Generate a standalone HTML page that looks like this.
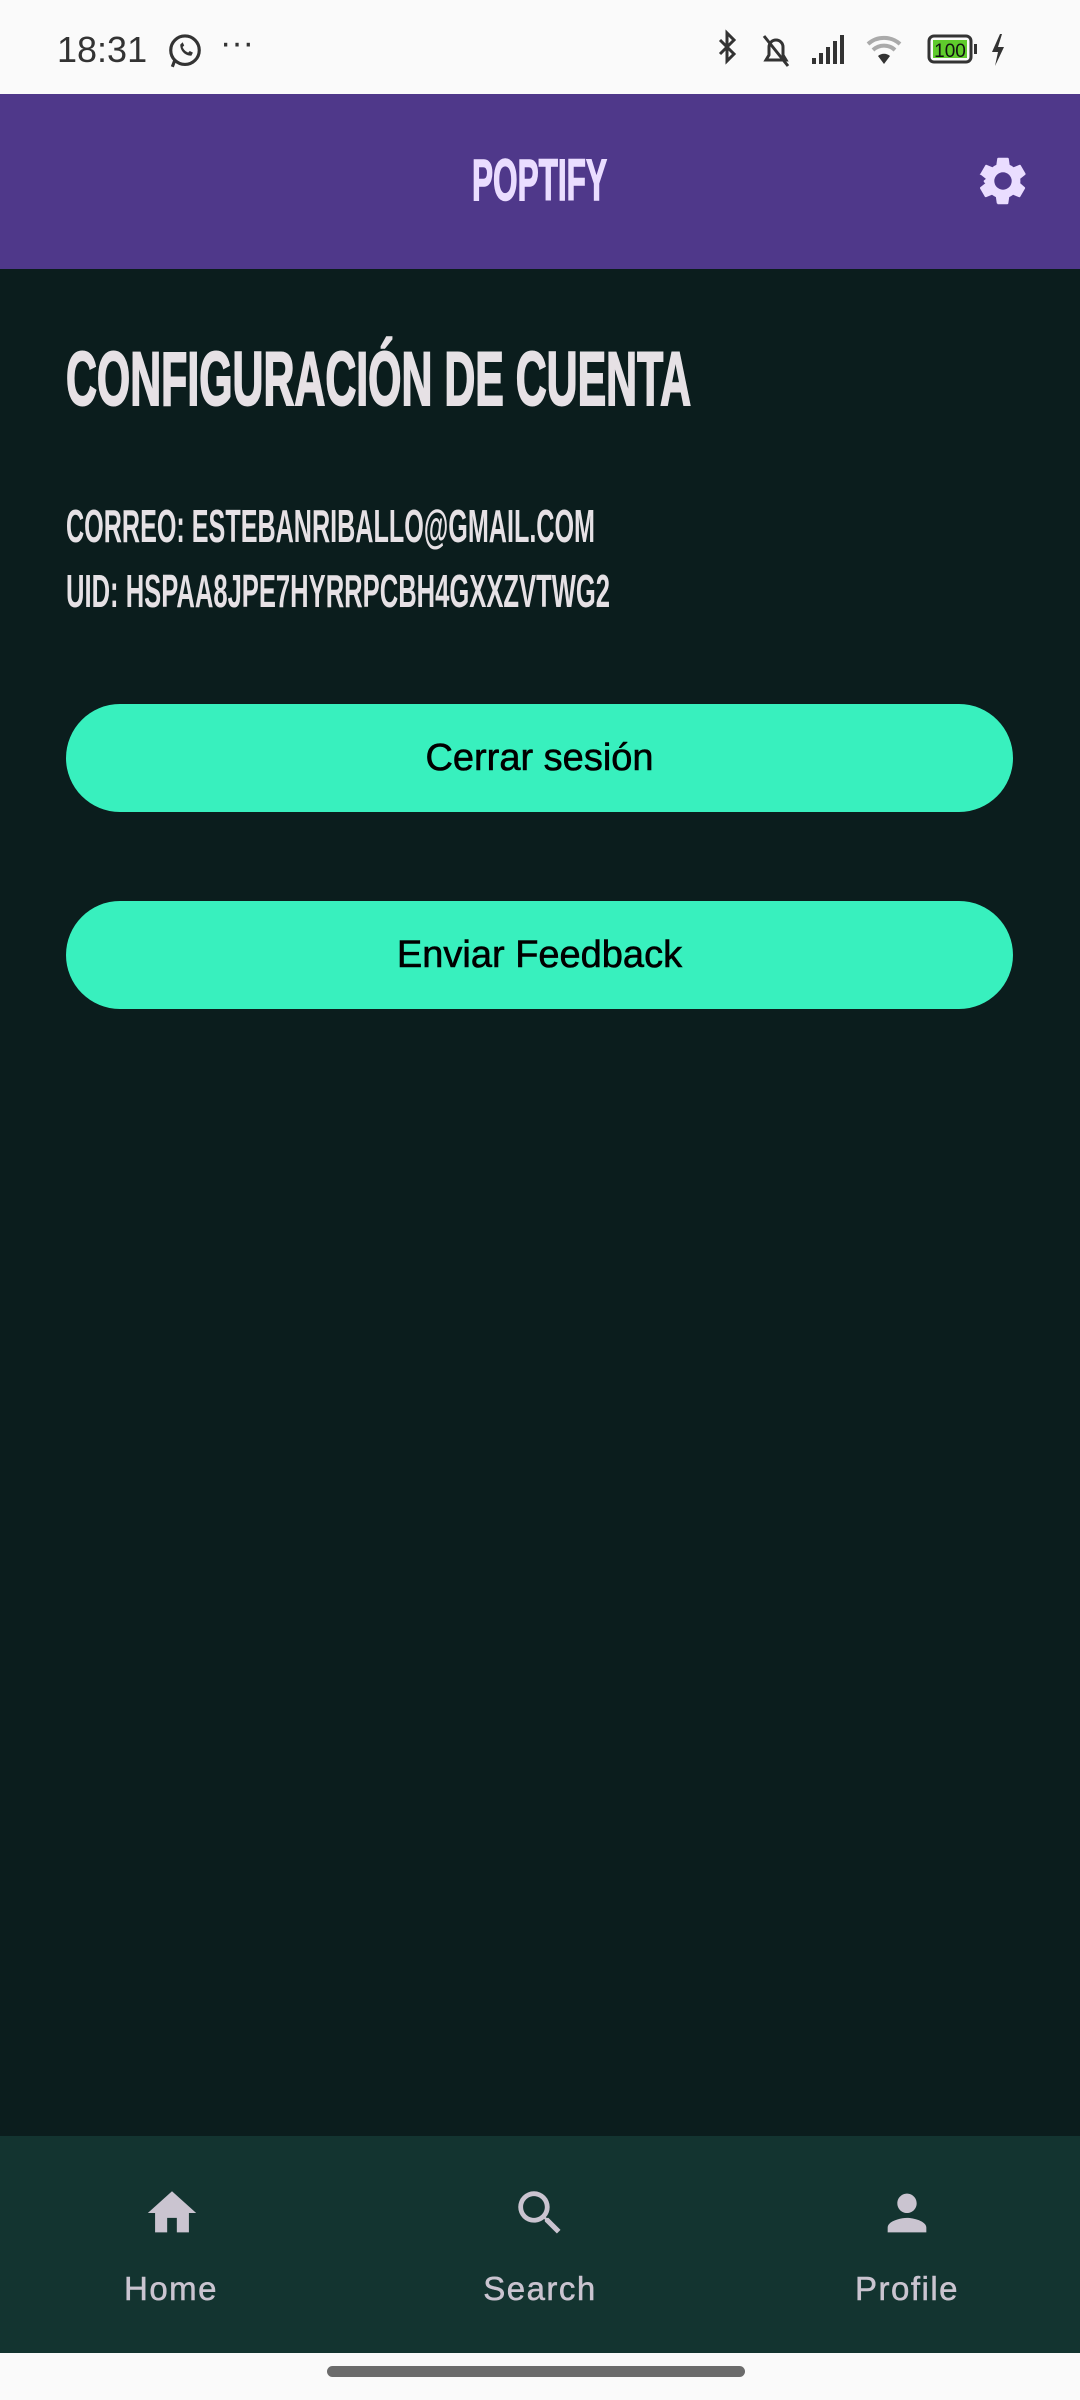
<!DOCTYPE html>
<html><head><meta charset="utf-8"><style>
html,body{margin:0;padding:0;width:1080px;height:2400px;overflow:hidden;background:#0b1d1d;font-family:"Liberation Sans",sans-serif}
.abs{position:absolute}
.btn{position:absolute;left:66px;width:947px;height:108px;border-radius:54px;background:#38f0be;color:#000;font-size:38px;display:flex;align-items:center;justify-content:center;font-family:"Liberation Sans",sans-serif;-webkit-text-stroke:0.6px #000}
.nav{position:absolute;top:2136px;left:0;width:1080px;height:217px;background:#133430}
.item{position:absolute;width:300px;text-align:center;color:#cac4d0;font-size:33px;letter-spacing:1.5px;-webkit-text-stroke:0.5px #cac4d0}
</style></head><body>
<div class="abs" style="left:0;top:0;width:1080px;height:94px;background:#fafafa"></div>
<div class="abs" style="left:57px;top:29px;font-size:36px;color:#333">18:31</div>
<svg class="abs" style="left:166px;top:32px" width="38" height="38" viewBox="0 0 24 24"><circle cx="12" cy="11.5" r="9" fill="none" stroke="#333" stroke-width="2"/><path d="M4 22l1.5-4" stroke="#333" stroke-width="2"/><path d="M9 8c0 4 3 7 7 7l1-2-2-1-1 1c-1.5-.5-3-2-3.5-3.5l1-1-1-2z" fill="#333"/></svg>
<div class="abs" style="left:220px;top:24px;font-size:34px;color:#333">···</div>
<svg class="abs" style="left:716px;top:28px" width="316" height="46" viewBox="0 0 316 42">
<path d="M4 10l14 14-7 7V3l7 7L4 24" fill="none" stroke="#333" stroke-width="3"/>
<path d="M50 30h20l-3-5v-8a7 7 0 0 0-14 0v8zM48 6l24 30" fill="none" stroke="#333" stroke-width="3"/>
<rect x="96" y="28" width="4" height="6" fill="#333"/><rect x="103" y="23" width="4" height="11" fill="#333"/><rect x="110" y="17" width="4" height="17" fill="#333"/><rect x="117" y="11" width="4" height="23" fill="#333"/><rect x="124" y="5" width="4" height="29" fill="#333"/>
<path d="M152 14a24 24 0 0 1 32 0M157 20a16 16 0 0 1 22 0" fill="none" stroke="#aaa" stroke-width="4"/><path d="M162 26a9 9 0 0 1 12 0l-6 8z" fill="#333"/>
<rect x="213" y="6" width="42" height="26" rx="5" fill="none" stroke="#333" stroke-width="3"/><rect x="217" y="10" width="34" height="18" fill="#5fcb2c"/><rect x="258" y="14" width="3" height="10" fill="#333"/>
<text x="234" y="27" font-size="19" text-anchor="middle" fill="#111" font-family="Liberation Sans">100</text>
<path d="M284 4l-8 18h6l-3 14 9-19h-6l4-13z" fill="#333"/>
</svg>
<div class="abs" style="left:0;top:94px;width:1080px;height:175px;background:#4f388a"></div>
<svg class="abs" style="left:0;top:0" width="1080" height="700">
<text x="472" y="200" font-size="58" font-weight="bold" fill="#eaddff" stroke="#eaddff" stroke-width="1.5" textLength="135" lengthAdjust="spacingAndGlyphs" font-family="Liberation Sans">POPTIFY</text>
<text x="66" y="405" font-size="76" font-weight="bold" fill="#e6e1e5" stroke="#e6e1e5" stroke-width="2" textLength="625" lengthAdjust="spacingAndGlyphs" font-family="Liberation Sans">CONFIGURACIÓN DE CUENTA</text>
<text x="66" y="542" font-size="46" font-weight="bold" fill="#e6e1e5" textLength="529" lengthAdjust="spacingAndGlyphs" font-family="Liberation Sans">CORREO: ESTEBANRIBALLO@GMAIL.COM</text>
<text x="66" y="607" font-size="46" font-weight="bold" fill="#e6e1e5" textLength="544" lengthAdjust="spacingAndGlyphs" font-family="Liberation Sans">UID: HSPAA8JPE7HYRRPCBH4GXXZVTWG2</text>
</svg>
<svg class="abs" style="left:974px;top:152px" width="58" height="58" viewBox="0 0 24 24"><path fill="#eaddff" d="M19.14 12.94c.04-.3.06-.61.06-.94 0-.32-.02-.64-.07-.94l2.03-1.58a.49.49 0 0 0 .12-.61l-1.92-3.32a.49.49 0 0 0-.59-.22l-2.39.96c-.5-.38-1.030-.7-1.62-.94l-.36-2.54a.48.48 0 0 0-.48-.41h-3.84c-.24 0-.43.17-.47.41l-.36 2.54c-.59.24-1.13.57-1.62.94l-2.390-.96a.48.48 0 0 0-.59.22L2.74 8.87c-.12.21-.8.47.12.61l2.03 1.58c-.05.3-.9.63-.9.94s.2.64.7.94l-2.03 1.58a.49.49 0 0 0-.12.61l1.92 3.32c.12.22.37.29.59.22l2.39-.96c.5.38 1.03.7 1.62.94l.36 2.54c.5.24.24.41.48.41h3.84c.24 0 .44-.17.47-.41l.36-2.54c.59-.24 1.13-.56 1.62-.94l2.39.96c.22.08.47 0 .59-.22l1.92-3.32a.49.49 0 0 0-.12-.61zM12 15.6A3.6 3.6 0 1 1 12 8.4a3.6 3.6 0 0 1 0 7.2z"/></svg>
<div class="btn" style="top:704px">Cerrar sesión</div>
<div class="btn" style="top:901px">Enviar Feedback</div>
<div class="nav">
<svg class="abs" style="left:143px;top:48px" width="58" height="58" viewBox="0 0 24 24"><path fill="#cac4d0" d="M10 20v-6h4v6h5v-8h3L12 3 2 12h3v8z"/></svg>
<svg class="abs" style="left:511px;top:48px" width="58" height="58" viewBox="0 0 24 24"><path fill="#cac4d0" d="M15.5 14h-.79l-.28-.27A6.47 6.47 0 0 0 16 9.5 6.5 6.5 0 1 0 9.5 16c1.61 0 3.09-.59 4.23-1.57l.27.28v.79l5 4.99L20.49 19zm-6 0C7.01 14 5 11.99 5 9.5S7.01 5 9.5 5 14 7.01 14 9.5 11.99 14 9.5 14z"/></svg>
<svg class="abs" style="left:878px;top:48px" width="58" height="58" viewBox="0 0 24 24"><path fill="#cac4d0" d="M12 12c2.21 0 4-1.79 4-4s-1.79-4-4-4-4 1.79-4 4 1.79 4 4 4zm0 2c-2.67 0-8 1.34-8 4v2h16v-2c0-2.66-5.33-4-8-4z"/></svg>
<div class="item" style="left:21px;top:134px">Home</div>
<div class="item" style="left:390px;top:134px">Search</div>
<div class="item" style="left:757px;top:134px">Profile</div>
</div>
<div class="abs" style="left:0;top:2353px;width:1080px;height:47px;background:#fafafa"></div>
<div class="abs" style="left:327px;top:2366px;width:418px;height:11px;border-radius:6px;background:#6b6b6b"></div>
</body></html>
